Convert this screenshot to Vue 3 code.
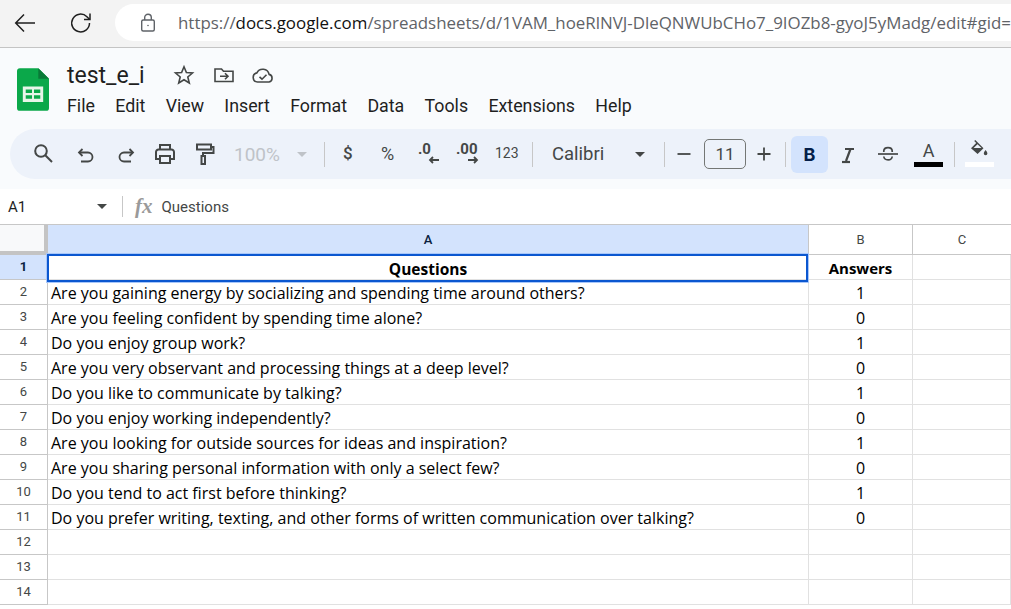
<template>
  <div class="page">
    <div class="chrome">
      <svg class="nav back" width="24" height="24" viewBox="0 0 24 24" fill="none" stroke="#1f1f1f" stroke-width="1.5"><path d="M22 12H3M11 3.500 2.700 12l8.300 8.500" /></svg>
      <svg class="nav reload" width="24" height="24" viewBox="0 0 24 24" fill="none" stroke="#1f1f1f" stroke-width="1.5"><path d="M20.500 12a8.900 8.900 0 1 1-2.600-6.300L20.500 8.300" /><path d="M21 2.500V8.500H15" /></svg>
      <div class="address">
        <svg class="lock" width="20" height="20" viewBox="0 0 20 20" fill="none" stroke="#5f6368" stroke-width="1.400"><rect x="3.700" y="7" width="12.600" height="11" rx="1.500" /><path d="M6.700 7V4.500a3.300 3.300 0 0 1 6.600 0V7" /><circle cx="10" cy="12.500" r=".8" fill="#5f6368" stroke="none" /></svg>
        <span class="url"><span class="scheme">https://</span><span class="host">docs.google.com</span><span class="scheme">/spreadsheets/d/1VAM_hoeRlNVJ-DleQNWUbCHo7_9IOZb8-gyoJ5yMadg/edit#gid=0</span></span>
      </div>
    </div>

    <div class="docs">
      <div class="titlebar">
        <svg class="logo" width="32" height="43" viewBox="0 0 33 44"><path d="M3 0h19l11 11v30a3 3 0 0 1-3 3H3a3 3 0 0 1-3-3V3a3 3 0 0 1 3-3z" fill="#0ba84a" /><path d="M22 0l11 11H22z" fill="#0a7a38" /><path d="M6 19h21v16H6zM9 22v3.500h6.500V22zm8.500 0v3.500H24V22zM9 28v3.500h6.500V28zm8.500 0v3.500H24V28z" fill="#e8f5e9" fill-rule="evenodd" /></svg>
        <div class="title-text">
          <div class="title-row">
            <span class="doc-name">test_e_i</span>
            <svg class="star" width="22" height="22" viewBox="0 0 22 22" fill="none" stroke="#444746" stroke-width="1.600"><path d="M11 2.800l2.400 5.700 6.100.5-4.700 4 1.500 6-5.300-3.200-5.300 3.200 1.500-6-4.700-4 6.100-.5z" /></svg>
            <svg class="move" width="22" height="22" viewBox="0 0 22 22" fill="none" stroke="#444746" stroke-width="1.600"><path d="M2 17.500V5h6.500l2 2.300H20v10.200z" /><path d="M7 12.300h8M12 9.300l3 3-3 3" /></svg>
            <svg class="cloud" width="24" height="22" viewBox="0 0 24 22" fill="none" stroke="#444746" stroke-width="1.600"><path d="M6.500 18a4.600 4.600 0 0 1-.6-9.100 6.500 6.500 0 0 1 12.200 1.500A3.900 3.900 0 0 1 18 18z" /><path d="M8.500 12.800l2.500 2.400 4.500-4.500" /></svg>
          </div>
          <nav class="menu">
            <span v-for="m in menus" :key="m">{{ m }}</span>
          </nav>
        </div>
      </div>

      <div class="toolbar">
        <svg class="t search" width="24" height="24" viewBox="0 0 24 24" fill="none" stroke="#444746" stroke-width="2"><circle cx="10" cy="10" r="5.800" /><path d="M14.300 14.300 21 21" /></svg>
        <svg class="t undo" width="24" height="24" viewBox="0 0 24 24" fill="none" stroke="#444746" stroke-width="1.800"><path d="M8.500 6 5 9.500 8.500 13" /><path d="M5 9.500h9a4.500 4.500 0 0 1 0 9H7" /></svg>
        <svg class="t redo" width="24" height="24" viewBox="0 0 24 24" fill="none" stroke="#444746" stroke-width="1.800"><path d="M15.500 6 19 9.500 15.500 13" /><path d="M19 9.500h-9a4.500 4.500 0 0 0 0 9h7" /></svg>
        <svg class="t print" width="24" height="24" viewBox="0 0 24 24" fill="none" stroke="#444746" stroke-width="2"><path d="M7 7V3h10v4" /><path d="M7 17H3v-7a2.500 2.500 0 0 1 2.500-2.500h13A2.500 2.500 0 0 1 21 10v7h-4" /><path d="M7 14h10v7H7z" /></svg>
        <svg class="t paint" width="24" height="24" viewBox="0 0 24 24" fill="none" stroke="#444746" stroke-width="2"><path d="M5 2.500h14v5H5z" /><path d="M19 5h2.500v6H11v3" /><path d="M9.500 14h3.500v8H9.500z" /></svg>
        <span class="zoom-level">100%</span>
        <span class="caret grey"></span>
        <i class="sep s1"></i>
        <span class="t fmt dollar">$</span>
        <span class="t fmt percent">%</span>
        <span class="t dec less">.0<svg width="12" height="8" viewBox="0 0 12 8" fill="none" stroke="#444746" stroke-width="1.800"><path d="M11 4H2M5 1 2 4l3 3" /></svg></span>
        <span class="t dec more">.00<svg width="12" height="8" viewBox="0 0 12 8" fill="none" stroke="#444746" stroke-width="1.800"><path d="M1 4h9M7 1l3 3-3 3" /></svg></span>
        <span class="t num">123</span>
        <i class="sep s2"></i>
        <span class="font-name">Calibri</span>
        <span class="caret"></span>
        <i class="sep s3"></i>
        <svg class="t minus" width="16" height="16" viewBox="0 0 16 16" stroke="#444746" stroke-width="1.800"><path d="M1.500 8h13" /></svg>
        <span class="size-box">11</span>
        <svg class="t plus" width="16" height="16" viewBox="0 0 16 16" stroke="#444746" stroke-width="1.800"><path d="M1.500 8h13M8 1.500v13" /></svg>
        <i class="sep s4"></i>
        <span class="bold">B</span>
        <svg class="t italic" width="24" height="24" viewBox="0 0 24 24" fill="none" stroke="#444746" stroke-width="2.200"><path d="M9 6h9M14.500 6 10 18" /><path d="M6 19h8" /></svg>
        <svg class="t strike" width="24" height="24" viewBox="0 0 24 24" fill="none" stroke="#444746" stroke-width="1.700"><path d="M2 12h20" /><path d="M7.800 10V9c0-4.500 8.400-4.500 8.400 0v1M7.800 14.500c.5 4.500 8 4.500 8.400 0" /></svg>
        <span class="t color-a"><span>A</span><b></b></span>
        <i class="sep s5"></i>
        <span class="t fill">
          <svg width="20" height="20" viewBox="0 0 20 20" fill="#444746"><path d="M4.200 1l1.100-1 8.200 8.200L7.600 14.100 1 8.200l5.200-5.100zM3.600 8h7.900L7.500 4.300z" fill-rule="evenodd" /><path d="M3.600 8h7.900l-3.900 4z" /><path d="M15.600 10c1 1.400 1.800 2.400 1.800 3.400a1.800 1.800 0 0 1-3.600 0c0-1 .8-2 1.800-3.400z" /></svg>
          <b></b>
        </span>
      </div>

      <div class="formula">
        <span class="cell-name">A1</span>
        <span class="caret small"></span>
        <i class="fsep"></i>
        <span class="fx">fx</span>
        <span class="fvalue">Questions</span>
      </div>
    </div>

    <div class="sheet">
      <div class="corner"></div>
      <div class="col-head active">A</div>
      <div class="col-head">B</div>
      <div class="col-head last">C</div>

      <template v-for="(r, i) in rows" :key="i">
        <div class="row-head" :class="{ active: i === 0 }">{{ i + 1 }}</div>
        <div class="cell" :class="{ selected: i === 0 }">{{ r[0] }}</div>
        <div class="cell center" :class="{ strong: i === 0 }">{{ r[1] }}</div>
        <div class="cell"></div>
      </template>
    </div>
  </div>
</template>

<script setup>
const menus = ['File', 'Edit', 'View', 'Insert', 'Format', 'Data', 'Tools', 'Extensions', 'Help']

const rows = [
  ['Questions', 'Answers'],
  ['Are you gaining energy by socializing and spending time around others?', '1'],
  ['Are you feeling confident by spending time alone?', '0'],
  ['Do you enjoy group work?', '1'],
  ['Are you very observant and processing things at a deep level?', '0'],
  ['Do you like to communicate by talking?', '1'],
  ['Do you enjoy working independently?', '0'],
  ['Are you looking for outside sources for ideas and inspiration?', '1'],
  ['Are you sharing personal information with only a select few?', '0'],
  ['Do you tend to act first before thinking?', '1'],
  ['Do you prefer writing, texting, and other forms of written communication over talking?', '0'],
  ['', ''],
  ['', ''],
  ['', ''],
]
</script>

<style scoped>
.page {
  width: 1011px;
  height: 609px;
  overflow: hidden;
  background: #fff;
  font-family: "Open Sans", "Noto Sans", sans-serif;
  color: #000;
}

.chrome {
  height: 48px;
  box-sizing: border-box;
  padding: 4px 0 6px 13px;
  background: #f3f3f3;
  border-bottom: 1px solid #c4c4c4;
  display: flex;
  align-items: center;
}
.nav {
  flex: none;
}
.nav.reload {
  margin-left: 32px;
}
.address {
  margin-left: 22px;
  height: 37px;
  flex: 1;
  min-width: 0;
  background: #fff;
  border-radius: 19px 0 0 19px;
  display: flex;
  align-items: center;
  padding-left: 23px;
  overflow: hidden;
}
.lock {
  flex: none;
}
.url {
  flex: none;
  margin-left: 20px;
  white-space: nowrap;
  font-size: 16.900px;
  font-family: "Open Sans", sans-serif;
}
.scheme {
  color: #5f6368;
}
.host {
  color: #111;
}

.docs {
  background: #f9fbfd;
  height: 177px;
  box-sizing: border-box;
}
.titlebar {
  display: flex;
  padding: 20px 0 0 17px;
  height: 81px;
  box-sizing: border-box;
}
.title-text {
  margin-left: 18px;
  margin-top: -8px;
}
.title-row {
  display: flex;
  align-items: center;
  height: 30px;
}
.doc-name {
  font-size: 23px;
  font-family: Roboto, sans-serif;
  color: #1f1f1f;
}
.star {
  margin-left: 28px;
}
.move {
  margin-left: 18px;
}
.cloud {
  margin-left: 16px;
}
.menu {
  display: flex;
  gap: 20.300px;
  font-size: 17.800px;
  margin-top: 4px;
  color: #1f1f1f;
  font-family: Roboto, sans-serif;
  line-height: 24px;
}

.toolbar {
  position: relative;
  margin-left: 10px;
  height: 50px;
  border-radius: 25px 0 0 25px;
  background: #edf2fa;
}
/* toolbar items sit on a fixed strip */
.t,
.sep,
.caret,
.zoom-level,
.font-name,
.size-box,
.bold {
  position: absolute;
}
.t.search { left: 21px; top: 12px; }
.t.undo { left: 64px; top: 14px; }
.t.redo { left: 104px; top: 14px; }
.t.print { left: 143px; top: 13px; }
.t.paint { left: 182px; top: 13px; }
.zoom-level {
  left: 224px;
  top: 14px;
  font-size: 19px;
  color: #bfc3c8;
  font-family: Roboto, sans-serif;
}
.caret {
  width: 0;
  height: 0;
  border-left: 5px solid transparent;
  border-right: 5px solid transparent;
  border-top: 5px solid #444746;
  left: 625px;
  top: 23px;
}
.caret.grey {
  left: 287px;
  border-top-color: #bfc3c8;
}
.sep {
  width: 1px;
  height: 25px;
  top: 13px;
  background: #c7c7c7;
}
.s1 { left: 314px; }
.s2 { left: 522px; }
.s3 { left: 654px; }
.s4 { left: 775px; }
.s5 { left: 944px; }
.fmt,
.num,
.dec {
  font-family: Roboto, sans-serif;
  color: #444746;
  font-size: 15px;
}
.dollar { left: 333px; top: 14px; font-weight: 500; font-size: 17px; }
.percent { left: 371px; top: 14px; font-size: 18px; }
.dec {
  top: 11px;
  font-weight: 700;
  font-size: 15px;
}
.dec svg {
  position: absolute;
  left: 10px;
  top: 16px;
}
.less { left: 408px; }
.more { left: 446px; }
.more svg { left: 11px; }
.num { left: 485px; top: 16px; font-size: 14px; }
.font-name {
  left: 542px;
  top: 14px;
  font-size: 18.500px;
  font-family: Roboto, sans-serif;
  color: #444746;
}
.t.minus { left: 666px; top: 17px; }
.size-box {
  left: 694px;
  top: 10px;
  width: 40px;
  height: 28px;
  border: 1px solid #747775;
  border-radius: 5px;
  text-align: center;
  line-height: 28px;
  font-size: 17px;
  font-family: Roboto, sans-serif;
  color: #444746;
}
.t.plus { left: 746px; top: 17px; }
.bold {
  left: 781px;
  top: 7px;
  width: 37px;
  height: 37px;
  border-radius: 6px;
  background: #d3e3fd;
  text-align: center;
  line-height: 37px;
  font-weight: 700;
  font-size: 18px;
  font-family: Inter, sans-serif;
  color: #041e49;
}
.t.italic { left: 826px; top: 14px; }
.t.strike { left: 866px; top: 13px; }
.color-a {
  left: 904px;
  top: 12px;
  width: 29px;
  text-align: center;
  font-family: Roboto, sans-serif;
  font-size: 18px;
  color: #444746;
  line-height: 20px;
}
.color-a b,
.fill b {
  position: absolute;
  left: 0;
  top: 21px;
  width: 29px;
  height: 5px;
  background: #000;
}
.fill {
  left: 945px;
  top: 4px;
  width: 39px;
  height: 36px;
}
.fill svg {
  position: absolute;
  left: 15px;
  top: 7px;
}
.fill b {
  left: 10px;
  top: 29px;
  background: #fff;
}

.formula {
  margin-top: 10px;
  height: 36px;
  box-sizing: border-box;
  background: #fff;
  display: flex;
  align-items: center;
  font-family: Roboto, sans-serif;
  color: #444746;
  font-size: 15px;
  border-bottom: 1px solid #c7c7c7;
}
.cell-name {
  margin-left: 8px;
  width: 89px;
  color: #1f1f1f;
}
.caret.small {
  position: static;
  border-top-color: #444746;
}
.fsep {
  width: 1px;
  height: 21px;
  margin-left: 15px;
  background: #c7c7c7;
}
.fx {
  margin-left: 12px;
  font-family: "Liberation Serif", serif;
  font-style: italic;
  font-weight: 700;
  font-size: 21px;
  color: #9a9a9a;
}
.fvalue {
  margin-left: 9px;
}

.sheet {
  display: grid;
  grid-template-columns: 48px 761px 104px 98px;
  grid-template-rows: 30px repeat(14, 25px);
  font-size: 16px;
}
.corner {
  background: #f8f9fa;
  border-right: 4px solid #c4c4c4;
  border-bottom: 4px solid #c4c4c4;
}
.col-head {
  border-right: 1px solid #c7c7c7;
  border-bottom: 1px solid #c7c7c7;
  font-family: Roboto, sans-serif;
  font-size: 13px;
  color: #444746;
  text-align: center;
  line-height: 29px;
}
.col-head.active {
  background: #d3e3fd;
  color: #0b1f3f;
  font-weight: 500;
}
.col-head.last {
  border-right: 0;
}
.row-head {
  border-right: 1px solid #c7c7c7;
  border-bottom: 1px solid #c7c7c7;
  font-family: Roboto, sans-serif;
  font-size: 13px;
  color: #444746;
  text-align: center;
  line-height: 24px;
  background: #fff;
}
.row-head.active {
  background: #d3e3fd;
  color: #0b1f3f;
  font-weight: 700;
}
.cell {
  border-right: 1px solid #e1e1e1;
  border-bottom: 1px solid #e1e1e1;
  padding: 1px 3px 0;
  line-height: 24px;
  white-space: nowrap;
  box-sizing: border-box;
}
.cell.center {
  text-align: center;
}
.cell.strong {
  font-weight: 700;
  font-size: 15px;
}
.cell.selected {
  text-align: center;
  font-weight: 700;
  font-size: 15.500px;
  padding-top: 2px;
  position: relative;
  z-index: 1;
  background: #fff;
}
.cell.selected::after {
  content: "";
  position: absolute;
  left: -1px;
  right: 0;
  top: -1px;
  bottom: -3px;
  border: 2px solid #0b57d0;
  box-shadow: 0 0 0 1px #a8c7fa;
}
</style>

<style>
html,
body {
  margin: 0;
  background: #fff;
}
</style>
